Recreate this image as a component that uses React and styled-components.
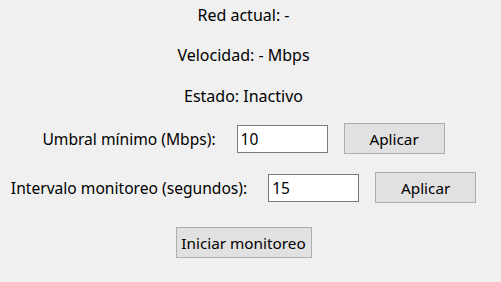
import React from "react";
import styled, { createGlobalStyle } from "styled-components";

const Global = createGlobalStyle`
  html, body { margin: 0; padding: 0; background: #f0f0f0; }
  body { font-family: "Noto Sans", "Open Sans", sans-serif; color: #000; }
`;

const Window = styled.div`
  width: 487px;
  height: 282px;
  box-sizing: border-box;
  padding-top: 5px;
  display: flex;
  flex-direction: column;
  align-items: center;
  background: #f0f0f0;
`;

const Info = styled.div`
  height: 21px;
  line-height: 21px;
  font-size: 16px;
  margin-top: ${(p) => p.$mt || 0}px;
  white-space: nowrap;
`;

const FormRow = styled.div`
  display: flex;
  align-items: center;
  height: 31px;
  margin-top: ${(p) => p.$mt || 0}px;
`;

const FieldLabel = styled.span`
  font-size: 15.6px;
  white-space: nowrap;
  margin-right: 21px;
`;

const Input = styled.input`
  width: 91px;
  height: 28px;
  box-sizing: border-box;
  border: 1px solid #7a7a7a;
  background: #fff;
  padding: 0 3px;
  font: inherit;
  font-size: 15.5px;
  color: #000;
  margin-right: 16px;
  outline: none;
`;

const Button = styled.button`
  width: ${(p) => p.$w || 101}px;
  height: 31px;
  box-sizing: border-box;
  border: 1px solid #adadad;
  background: #e1e1e1;
  font: inherit;
  font-size: 15.3px;
  color: #000;
  padding: 0;
  margin-top: ${(p) => p.$mt || 0}px;
`;

export default function App() {
  return (
    <>
      <Global />
      <Window>
        <Info>Red actual: -</Info>
        <Info $mt={19}>Velocidad: - Mbps</Info>
        <Info $mt={20}>Estado: Inactivo</Info>
        <FormRow $mt={16}>
          <FieldLabel>Umbral mínimo (Mbps):</FieldLabel>
          <Input defaultValue="10" />
          <Button>Aplicar</Button>
        </FormRow>
        <FormRow $mt={18}>
          <FieldLabel>Intervalo monitoreo (segundos):</FieldLabel>
          <Input defaultValue="15" />
          <Button>Aplicar</Button>
        </FormRow>
        <Button $w={136} $mt={24}>Iniciar monitoreo</Button>
      </Window>
    </>
  );
}
